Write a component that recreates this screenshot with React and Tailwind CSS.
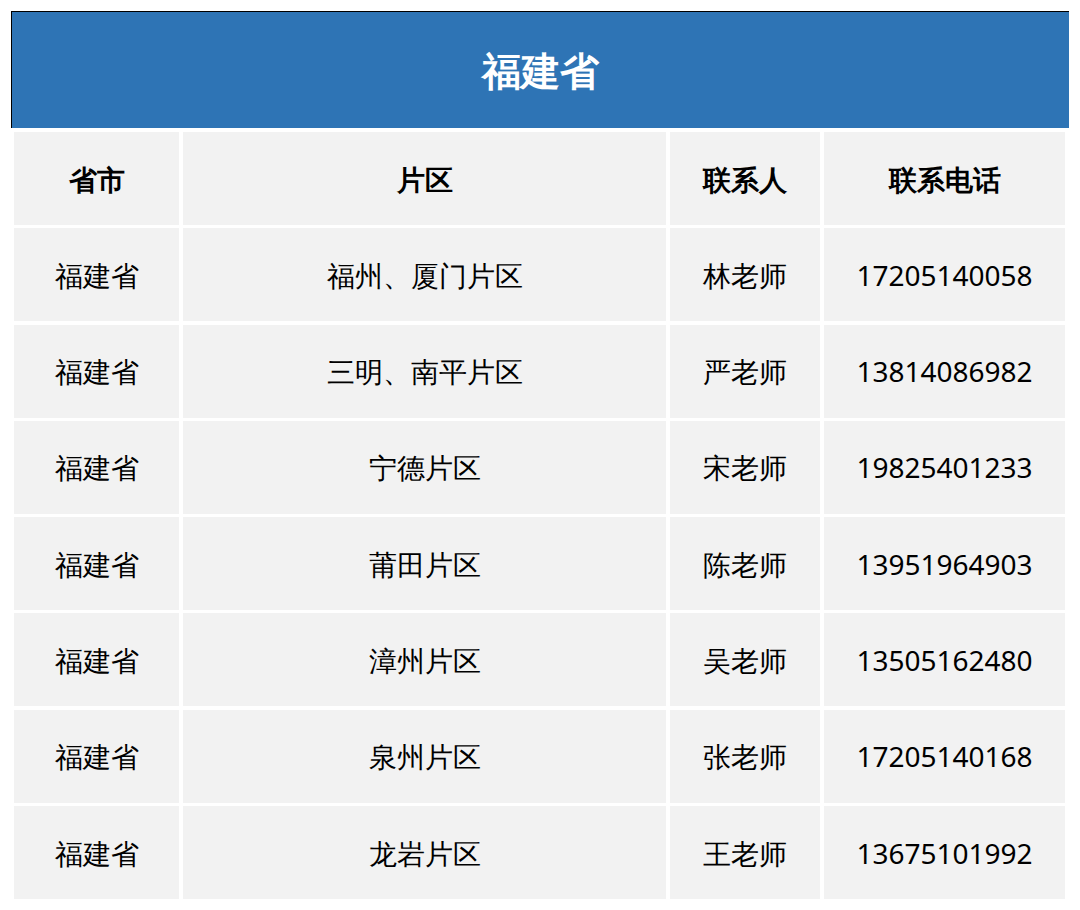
const rows = [
  ["福建省", "福州、厦门片区", "林老师", "17205140058"],
  ["福建省", "三明、南平片区", "严老师", "13814086982"],
  ["福建省", "宁德片区", "宋老师", "19825401233"],
  ["福建省", "莆田片区", "陈老师", "13951964903"],
  ["福建省", "漳州片区", "吴老师", "13505162480"],
  ["福建省", "泉州片区", "张老师", "17205140168"],
  ["福建省", "龙岩片区", "王老师", "13675101992"],
];

const widths = ["w-[165px]", "w-[483px]", "w-[150px]", "w-[241px]"];

function Row({ cells, bold }) {
  return (
    <div className="flex gap-[4px] h-[93px]">
      {cells.map((c, i) => (
        <div
          key={i}
          className={`${widths[i]} bg-[#f2f2f2] flex items-center justify-center text-[28px] text-black ${bold ? "font-bold" : ""}`}
        >
          {c}
        </div>
      ))}
    </div>
  );
}

export default function App() {
  return (
    <div className="bg-white w-[1080px] h-[910px] pt-[11px] pl-[11px] font-['Open_Sans','Noto_Sans_CJK_SC',sans-serif]">
      <div className="w-[1058px] h-[117px] bg-[#2e74b5] border-t border-l border-black flex items-center justify-center text-white text-[39px] font-bold">
        福建省
      </div>
      <div className="pl-[3px] pt-[4px] flex flex-col gap-[3.3px]">
        <Row cells={["省市", "片区", "联系人", "联系电话"]} bold />
        {rows.map((r, i) => (
          <Row key={i} cells={r} />
        ))}
      </div>
    </div>
  );
}
